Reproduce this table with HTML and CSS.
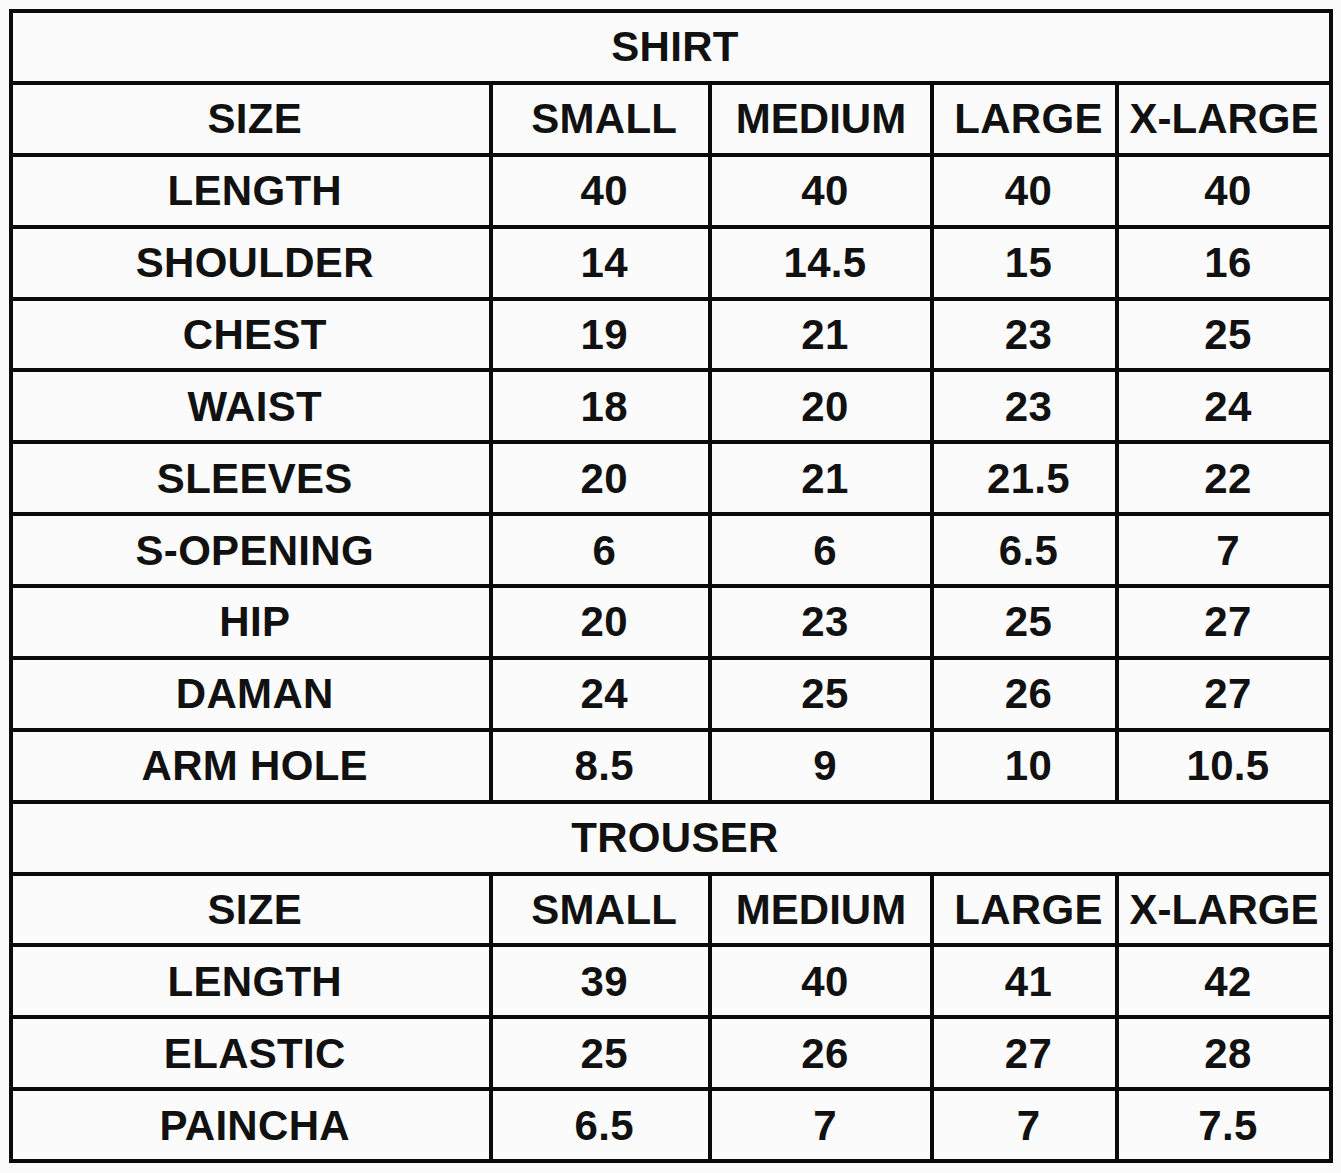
FILE: index.html
```html
<!DOCTYPE html>
<html lang="en">
<head>
<meta charset="utf-8">
<title>Size Chart</title>
<link rel="stylesheet" href="styles.css">
</head>
<body>
<div class="chart">
  <div class="cell title">SHIRT</div>
  <div class="cell">SIZE</div><div class="cell">SMALL</div><div class="cell wide">MEDIUM</div><div class="cell">LARGE</div><div class="cell wide">X-LARGE</div>
  <div class="cell">LENGTH</div><div class="cell">40</div><div class="cell">40</div><div class="cell">40</div><div class="cell">40</div>
  <div class="cell">SHOULDER</div><div class="cell">14</div><div class="cell">14.5</div><div class="cell">15</div><div class="cell">16</div>
  <div class="cell">CHEST</div><div class="cell">19</div><div class="cell">21</div><div class="cell">23</div><div class="cell">25</div>
  <div class="cell">WAIST</div><div class="cell">18</div><div class="cell">20</div><div class="cell">23</div><div class="cell">24</div>
  <div class="cell">SLEEVES</div><div class="cell">20</div><div class="cell">21</div><div class="cell">21.5</div><div class="cell">22</div>
  <div class="cell">S-OPENING</div><div class="cell">6</div><div class="cell">6</div><div class="cell">6.5</div><div class="cell">7</div>
  <div class="cell">HIP</div><div class="cell">20</div><div class="cell">23</div><div class="cell">25</div><div class="cell">27</div>
  <div class="cell">DAMAN</div><div class="cell">24</div><div class="cell">25</div><div class="cell">26</div><div class="cell">27</div>
  <div class="cell">ARM HOLE</div><div class="cell">8.5</div><div class="cell">9</div><div class="cell">10</div><div class="cell">10.5</div>
  <div class="cell title">TROUSER</div>
  <div class="cell">SIZE</div><div class="cell">SMALL</div><div class="cell wide">MEDIUM</div><div class="cell">LARGE</div><div class="cell wide">X-LARGE</div>
  <div class="cell">LENGTH</div><div class="cell">39</div><div class="cell">40</div><div class="cell">41</div><div class="cell">42</div>
  <div class="cell">ELASTIC</div><div class="cell">25</div><div class="cell">26</div><div class="cell">27</div><div class="cell">28</div>
  <div class="cell">PAINCHA</div><div class="cell">6.5</div><div class="cell">7</div><div class="cell">7</div><div class="cell">7.5</div>
</div>
</body>
</html>
```
FILE: styles.css
```css
html, body {
  margin: 0;
  padding: 0;
  background: #fbfbfb;
}
body {
  padding: 9px;
  font-family: "Liberation Sans", Arial, sans-serif;
}
.chart {
  width: 1324px;
  box-sizing: border-box;
  display: grid;
  grid-template-columns: 475.5px 215.5px 218px 181px 210px;
  grid-template-rows: repeat(16, 67.875px);
  gap: 4px;
  padding: 4px;
  background: #0a0a0a;
}
.cell {
  background: #fbfbfb;
  color: #111;
  font-weight: 700;
  font-size: 42px;
  display: flex;
  align-items: center;
  justify-content: center;
  white-space: nowrap;
  line-height: 1;
  padding: 1px 0 0 8px;
  letter-spacing: 0.3px;
}
.cell.wide {
  padding-left: 0;
  letter-spacing: 0;
}
.title {
  grid-column: 1 / -1;
}
```
